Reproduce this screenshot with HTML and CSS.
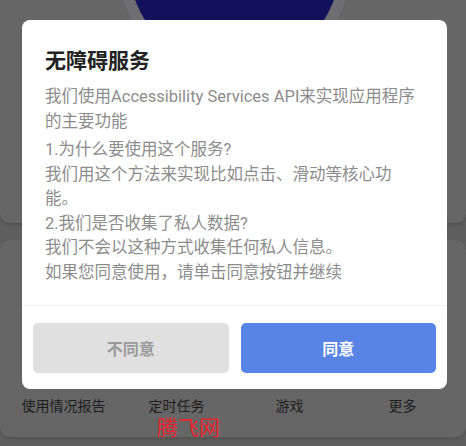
FILE: index.html
```html
<!DOCTYPE html>
<html lang="zh-CN">
<head>
<meta charset="utf-8">
<link rel="stylesheet" href="styles.css">
</head>
<body>
<div class="page">
  <div class="hero">
    <div class="ring"><div class="disc"></div></div>
  </div>
  <div class="card card-top"></div>
  <div class="card card-main">
    <div class="tabs">
      <span class="tab">使用情况报告</span>
      <span class="tab">定时任务</span>
      <span class="tab">游戏</span>
      <span class="tab">更多</span>
    </div>
  </div>
</div>

<div class="dialog">
  <div class="dialog-body">
    <h2 class="dialog-title">无障碍服务</h2>
    <p class="dialog-text">我们使用Accessibility Services API来实现应用程序的主要功能</p>
    <p class="dialog-text spaced">1.为什么要使用这个服务?<br>我们用这个方法来实现比如点击、滑动等核心功能。<br>2.我们是否收集了私人数据?<br>我们不会以这种方式收集任何私人信息。<br>如果您同意使用，请单击同意按钮并继续</p>
  </div>
  <div class="dialog-actions">
    <button class="btn btn-cancel">不同意</button>
    <button class="btn btn-ok">同意</button>
  </div>
</div>

<div class="watermark">腾飞网</div>
</body>
</html>
```

FILE: styles.css
```css
* { box-sizing: border-box; }
html, body {
  margin: 0;
  padding: 0;
}
body {
  width: 466px;
  height: 446px;
  overflow: hidden;
  background: #5e5e5e;
  font-family: Roboto, "Noto Sans CJK SC", sans-serif;
  position: relative;
}
.page {
  display: flex;
  flex-direction: column;
}
.hero {
  height: 100px;
  background: #666666;
  display: flex;
  justify-content: center;
  overflow: hidden;
}
.ring {
  flex: none;
  width: 233px;
  height: 233px;
  margin-top: -152px;
  margin-left: 2px;
  border-radius: 50%;
  background: #6e6e73;
  padding: 11px;
}
.disc {
  width: 100%;
  height: 100%;
  border-radius: 50%;
  background: #12125a;
}
.card {
  background: #666666;
  border-radius: 10px;
  box-shadow: 0 2px 3px rgba(0,0,0,0.12);
}
.card-top {
  height: 123px;
  border-radius: 0 0 10px 10px;
}
.card-main {
  margin-top: 17px;
  height: 197px;
  display: flex;
  flex-direction: column;
  justify-content: flex-end;
  padding: 0 7px 24px;
}
.tabs {
  display: grid;
  grid-template-columns: repeat(4, 1fr);
  font-size: 14px;
  line-height: 16px;
  color: #1e1e1e;
  text-align: center;
  font-family: "Noto Sans CJK SC", sans-serif;
}
.dialog {
  position: absolute;
  left: 22px;
  top: 20px;
  width: 425px;
  background: #ffffff;
  border-radius: 8px;
  overflow: hidden;
}
.dialog-body {
  padding: 25px 25px 20px 23px;
  border-bottom: 1px solid #eeeeee;
}
.dialog-title {
  margin: 0 0 12px;
  font-size: 21px;
  line-height: 28px;
  font-weight: 700;
  color: #222222;
  font-family: "Noto Sans CJK SC", sans-serif;
}
.dialog-text {
  margin: 0;
  font-size: 16.5px;
  line-height: 24.5px;
  color: #8c8c8c;
}
.dialog-text.spaced {
  margin-top: 4px;
}
.dialog-actions {
  display: flex;
  gap: 12px;
  padding: 17px 11px 16px;
}
.btn {
  flex: 1;
  height: 50px;
  border: none;
  border-radius: 5px;
  font-size: 16px;
  font-weight: 700;
  font-family: "Noto Sans CJK SC", sans-serif;
}
.btn-cancel {
  background: #e0e0e0;
  color: #9a9a9a;
}
.btn-ok {
  background: #5884e6;
  color: #ffffff;
}
.watermark {
  position: absolute;
  left: 157px;
  top: 415px;
  font-size: 21px;
  line-height: 22px;
  color: #e8262f;
  font-weight: 400;
  font-family: "Noto Sans CJK SC", sans-serif;
}
```
